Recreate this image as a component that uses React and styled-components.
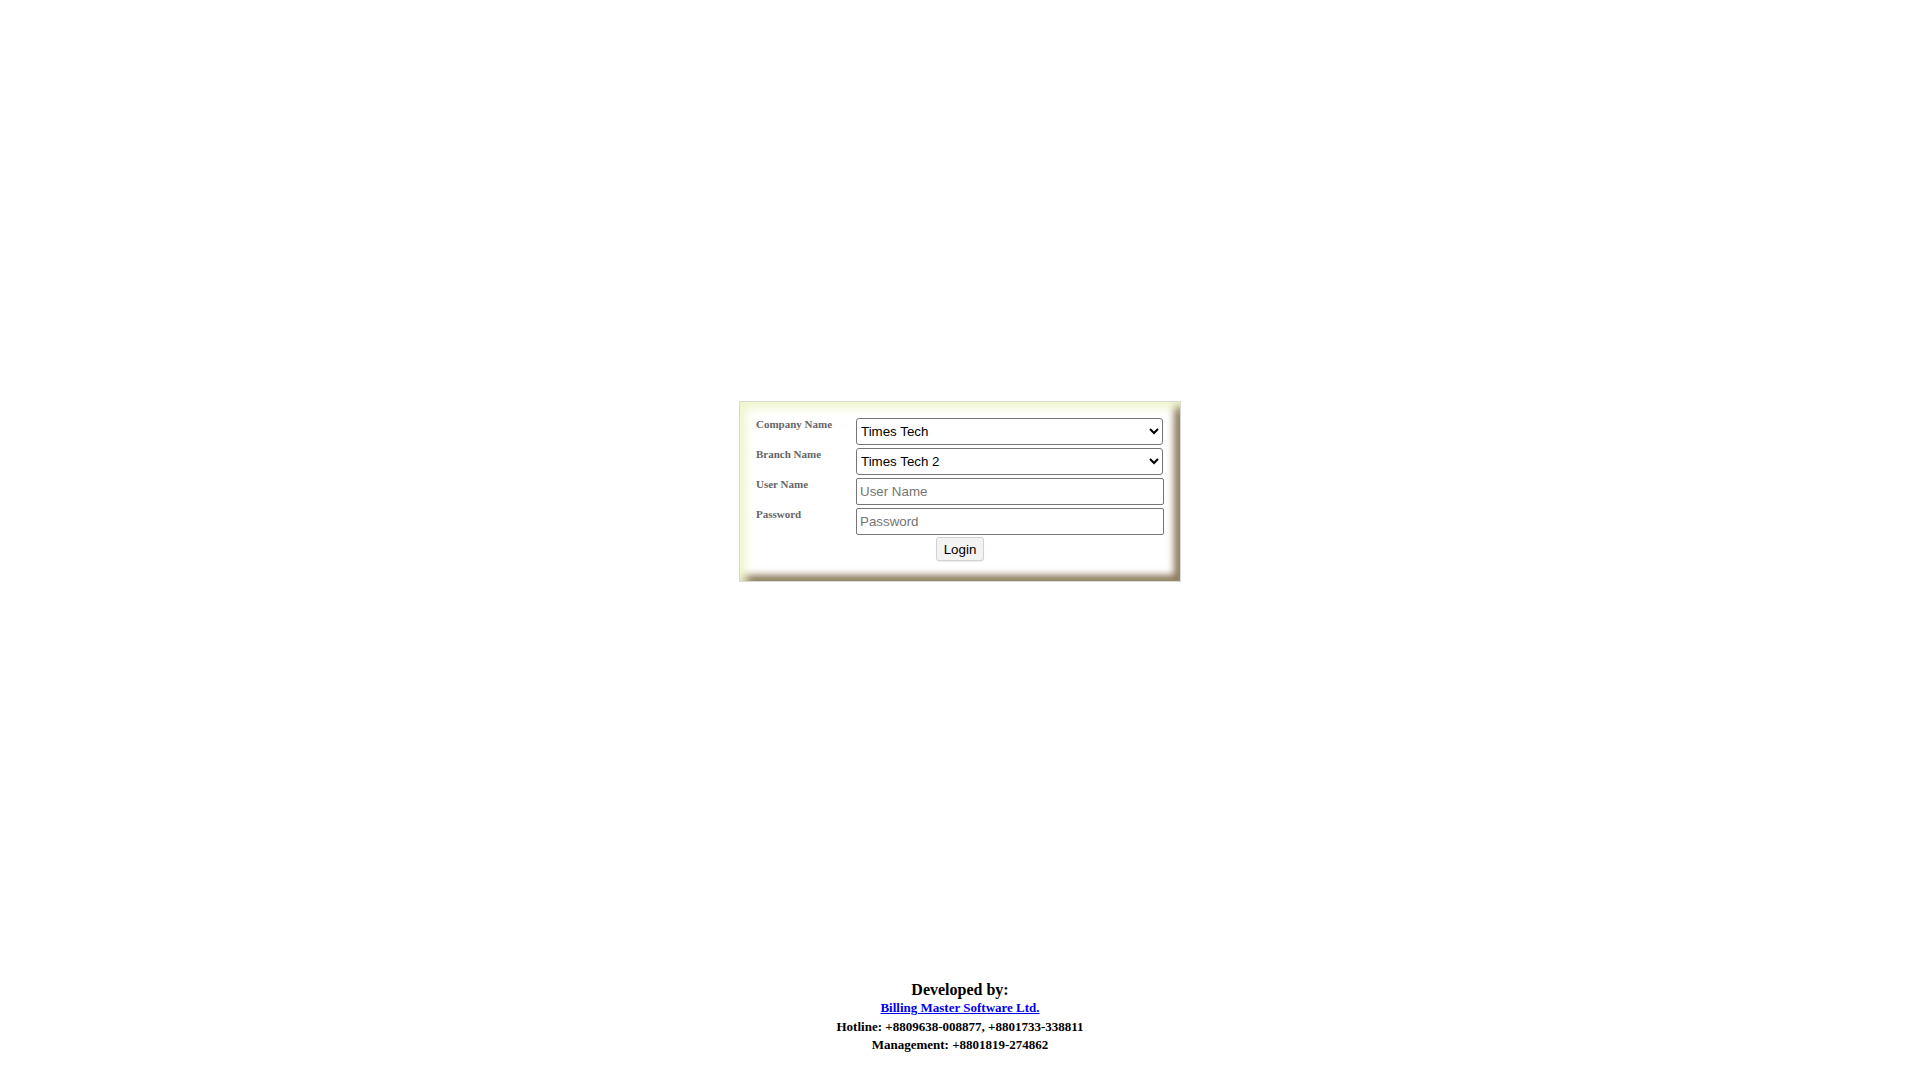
import React from "react";
import { styled, createGlobalStyle } from "styled-components";

const GlobalStyle = createGlobalStyle`
  html, body {
    margin: 0;
    padding: 0;
    background: #ffffff;
  }
  body {
    font-family: "Liberation Serif", "Times New Roman", serif;
  }
`;

const Page = styled.div`
  display: flex;
  flex-direction: column;
  align-items: center;
  padding-top: 401px;
`;

const LoginBox = styled.form`
  width: 442px;
  box-sizing: border-box;
  border: 1px solid #d8d8d8;
  padding: 16px 16px 19px 16px;
  background: #ffffff;
  box-shadow: inset 6px 6px 10px #eff6cc, inset -6px -6px 7px #8a7a5a;
  display: grid;
  grid-template-columns: 100px 308px;
  grid-template-rows: repeat(4, 27px) 24px;
  row-gap: 3px;
`;

const Label = styled.label`
  font-family: "Liberation Serif", "Times New Roman", serif;
  font-size: 11px;
  font-weight: bold;
  color: #666666;
  line-height: 13px;
`;

const Select = styled.select`
  width: 307px;
  height: 27px;
  box-sizing: border-box;
  margin: 0;
  font-family: "Liberation Sans", Arial, sans-serif;
  font-size: 13.33px;
  color: #000;
  background: #fff;
  border: 1px solid #767676;
  border-radius: 3px;
  padding: 0;
`;

const Input = styled.input`
  width: 308px;
  height: 27px;
  box-sizing: border-box;
  margin: 0;
  font-family: "Liberation Sans", Arial, sans-serif;
  font-size: 13.33px;
  color: #000;
  background: #fff;
  border: 1px solid #767676;
  border-radius: 2px;
  padding: 0 3px;

  &::placeholder {
    color: #757575;
  }
`;

const ButtonRow = styled.div`
  grid-column: 1 / -1;
  display: flex;
  justify-content: center;
  height: 24px;
  margin-top: -1px;
`;

const Button = styled.button`
  height: 24px;
  padding: 0 7px;
  font-family: "Liberation Sans", Arial, sans-serif;
  font-size: 13.33px;
  color: #000;
  background: #f3f3f3;
  border: 1px solid #d2d2d2;
  border-radius: 3px;
  box-shadow: 0 1px 1px rgba(0, 0, 0, 0.08);
`;

const Footer = styled.footer`
  margin-top: 399px;
  text-align: center;
  font-family: "Liberation Serif", "Times New Roman", serif;
  font-weight: bold;
  color: #000;
  line-height: 18.4px;
`;

const FooterTitle = styled.div`
  font-size: 16px;
`;

const FooterLine = styled.div`
  font-size: 13px;
`;

const FooterLink = styled.a`
  color: #0000ee;
  text-decoration: underline;
`;

export default function App() {
  return (
    <>
      <GlobalStyle />
      <Page>
        <LoginBox onSubmit={(e) => e.preventDefault()}>
          <Label>Company Name</Label>
          <Select defaultValue="1">
            <option value="1">Times Tech</option>
          </Select>
          <Label>Branch Name</Label>
          <Select defaultValue="2">
            <option value="2">Times Tech 2</option>
          </Select>
          <Label>User Name</Label>
          <Input type="text" placeholder="User Name" />
          <Label>Password</Label>
          <Input type="password" placeholder="Password" />
          <ButtonRow>
            <Button type="submit">Login</Button>
          </ButtonRow>
        </LoginBox>
        <Footer>
          <FooterTitle>Developed by:</FooterTitle>
          <FooterLine>
            <FooterLink href="#">Billing Master Software Ltd.</FooterLink>
          </FooterLine>
          <FooterLine>Hotline: +8809638-008877, +8801733-338811</FooterLine>
          <FooterLine>Management: +8801819-274862</FooterLine>
        </Footer>
      </Page>
    </>
  );
}
